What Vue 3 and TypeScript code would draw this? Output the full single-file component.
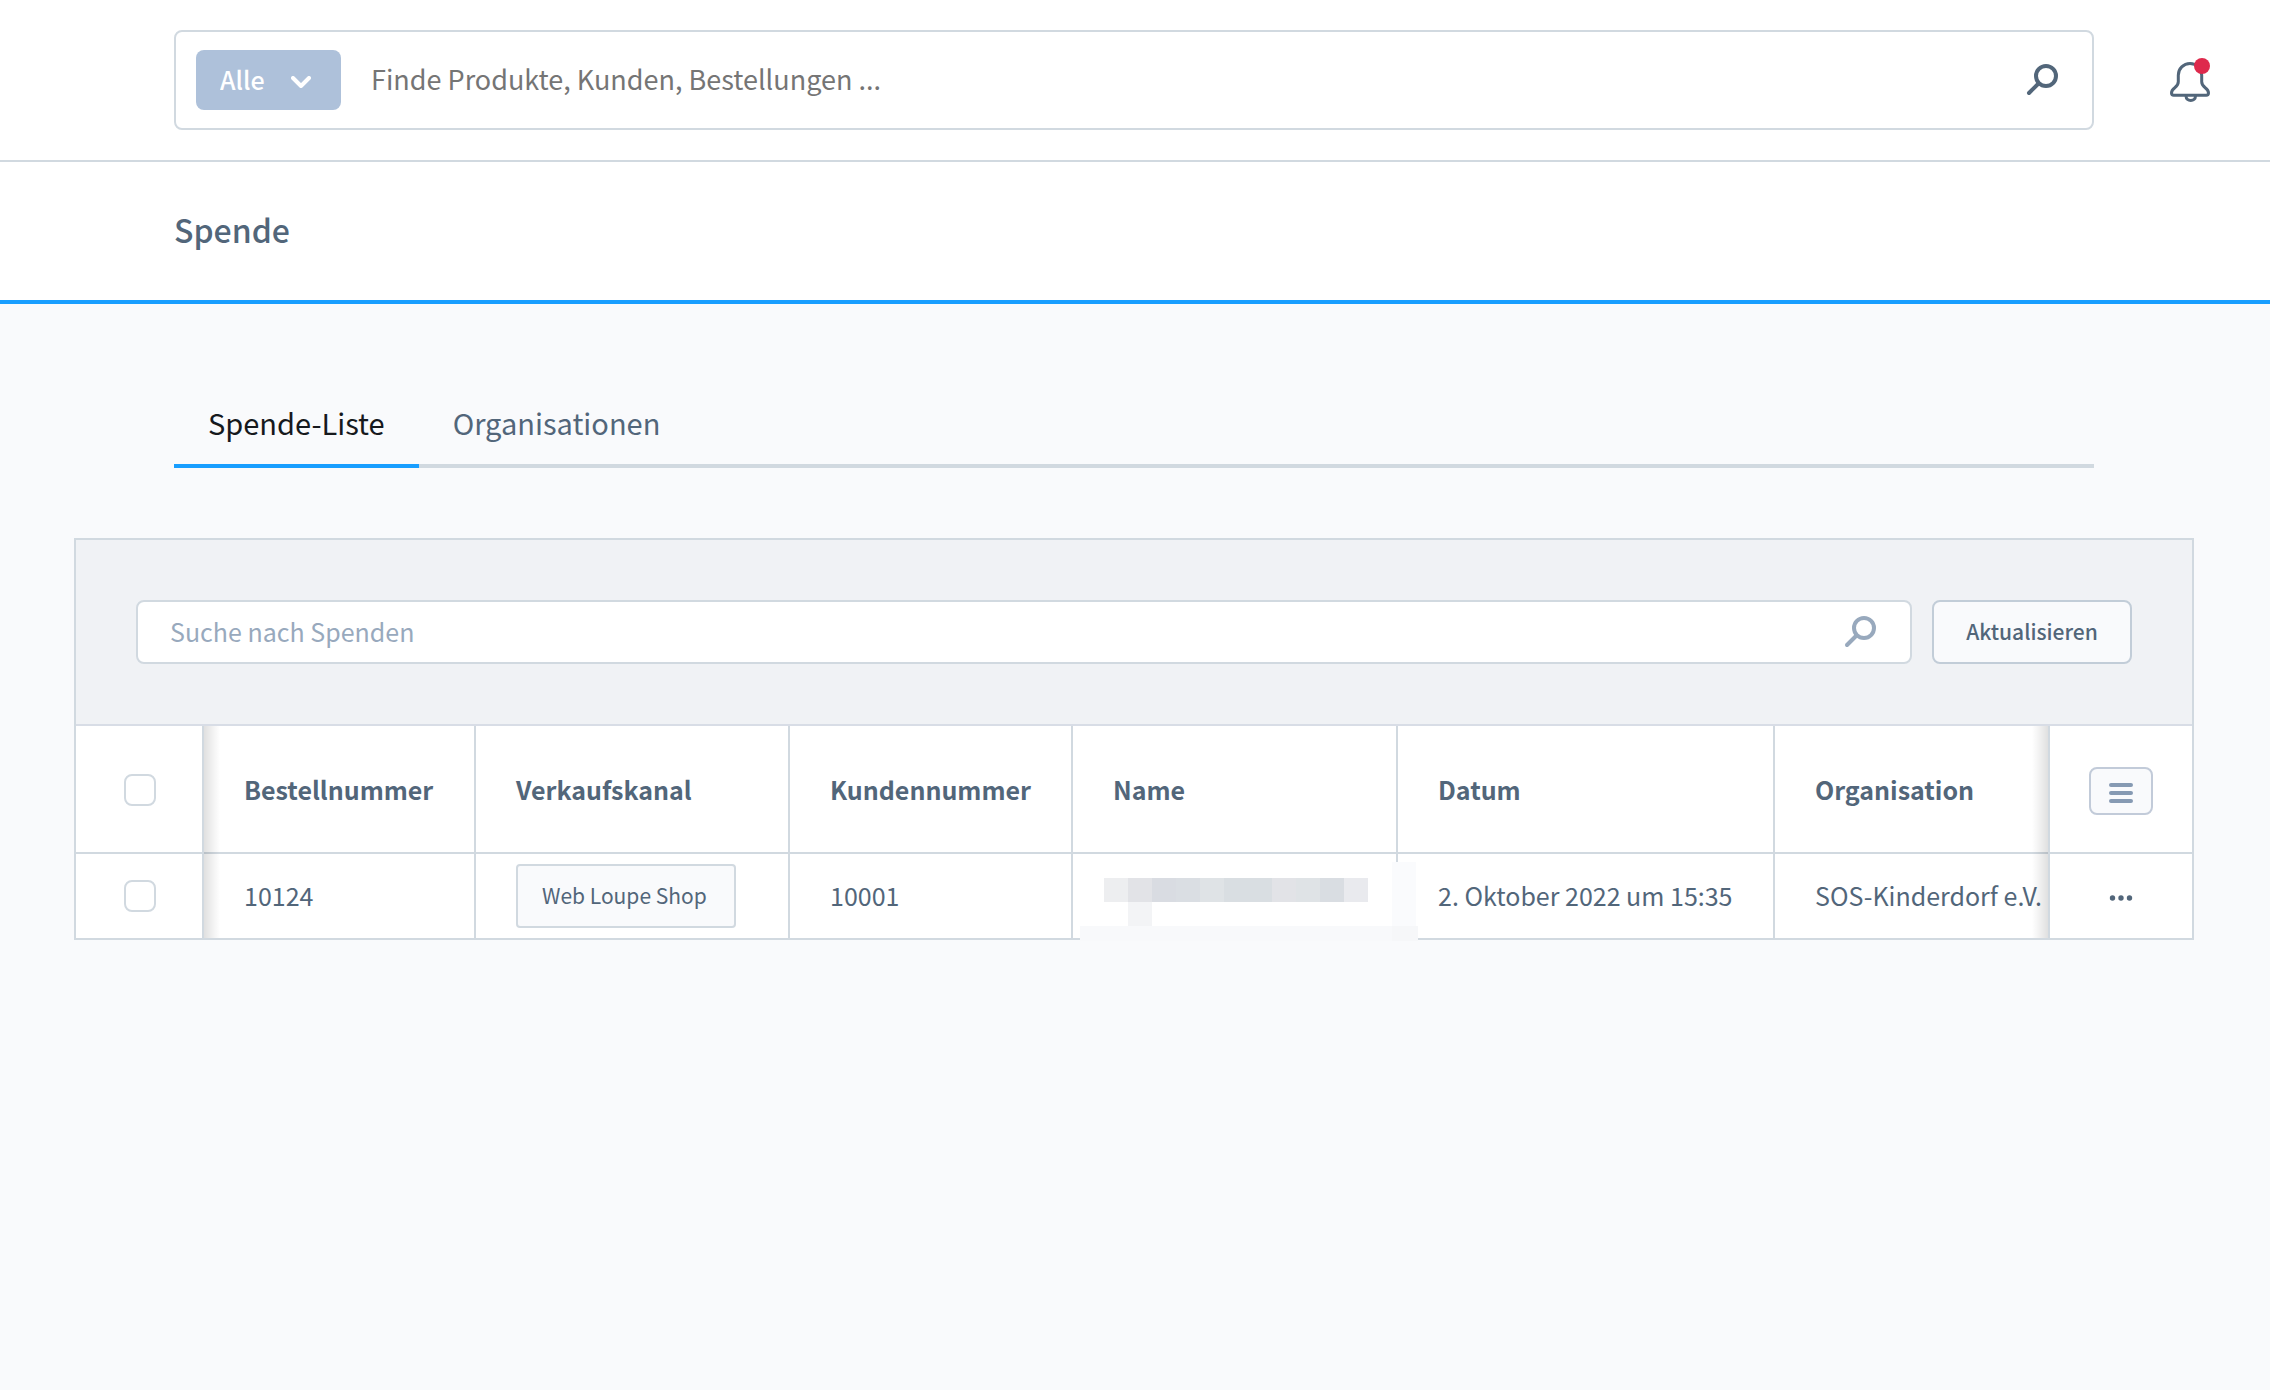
<script setup lang="ts">
import { ref } from 'vue'

interface Donation {
  orderNumber: string
  salesChannel: string
  customerNumber: string
  date: string
  organisation: string
}

const scope = ref('Alle')
const globalTerm = ref('')
const listTerm = ref('')
const activeTab = ref('Spende-Liste')
const tabs = ['Spende-Liste', 'Organisationen']
const columns = ['Bestellnummer', 'Verkaufskanal', 'Kundennummer', 'Name', 'Datum', 'Organisation']
const donations: Donation[] = [
  {
    orderNumber: '10124',
    salesChannel: 'Web Loupe Shop',
    customerNumber: '10001',
    date: '2. Oktober 2022 um 15:35',
    organisation: 'SOS-Kinderdorf e.V.',
  },
]

// Shades of the pixelated block that hides the customer name
const mosaic = ['#edeef0', '#e2e3e7', '#d9dce2', '#dadee3', '#dfe3e6', '#d9dee2', '#d9dee2', '#e2e3e7', '#dfe3e6', '#d9dde2', '#e9eaee']
</script>

<template>
  <div class="page">
    <header class="topbar">
      <form class="global-search" role="search" @submit.prevent>
        <div class="scope">
          <select v-model="scope" class="scope-select" aria-label="Alle">
            <option>Alle</option>
          </select>
          <svg class="scope-caret" width="20" height="12" viewBox="0 0 20 12" aria-hidden="true">
            <path d="M2 2l8 8 8-8" fill="none" stroke="#fff" stroke-width="4" stroke-linecap="round" stroke-linejoin="round" />
          </svg>
        </div>
        <input
          v-model="globalTerm"
          class="global-input"
          type="text"
          placeholder="Finde Produkte, Kunden, Bestellungen ..."
          aria-label="Finde Produkte, Kunden, Bestellungen ..."
        />
        <svg class="search-icon" width="32" height="32" viewBox="0 0 32 32" aria-hidden="true">
          <circle cx="20" cy="12" r="10" />
          <path d="M12.5 19.5L3 29" />
        </svg>
      </form>
      <button class="bell" type="button">
        <svg width="40" height="44" viewBox="0 0 40 44" aria-hidden="true">
          <g fill="none" stroke="#52667a" stroke-width="3" stroke-linejoin="round">
            <path d="M20 5.500a11.700 11.700 0 0 0-11.700 11.700v6.500c0 3-1.500 4.500-3.500 6-2 1.500-3.300 3-3.300 5.300q0 2.200 2.200 2.200h32.600q2.200 0 2.200-2.200c0-2.300-1.300-3.800-3.300-5.300-2-1.500-3.500-3-3.500-6v-6.500a11.700 11.700 0 0 0-11.700-11.700z" />
            <path d="M16 38c0 6 9.500 6 9.500 0" />
          </g>
          <circle cx="32" cy="8" r="8" fill="#de294c" />
        </svg>
      </button>
    </header>

    <div class="title-bar">
      <h1>Spende</h1>
    </div>

    <main>
      <nav class="tabs">
        <a
          v-for="tab in tabs"
          :key="tab"
          href="#"
          class="tab"
          :class="{ active: tab === activeTab }"
          @click.prevent="activeTab = tab"
        >{{ tab }}</a>
      </nav>

      <section class="card">
        <div class="toolbar">
          <label class="list-search">
            <input v-model="listTerm" type="text" placeholder="Suche nach Spenden" aria-label="Suche nach Spenden" />
            <svg class="search-icon" width="32" height="32" viewBox="0 0 32 32" aria-hidden="true">
              <circle cx="20" cy="12" r="10" />
              <path d="M12.5 19.5L3 29" />
            </svg>
          </label>
          <button class="refresh" type="button">Aktualisieren</button>
        </div>

        <table class="grid">
          <colgroup>
            <col class="c-check" />
            <col class="c-order" />
            <col class="c-channel" />
            <col class="c-customer" />
            <col class="c-name" />
            <col class="c-date" />
            <col />
            <col class="c-actions" />
          </colgroup>
          <thead>
            <tr>
              <th class="check"><input type="checkbox" /></th>
              <th v-for="column in columns" :key="column" scope="col">{{ column }}</th>
              <th class="actions">
                <button class="columns-button" type="button">
                  <svg width="24" height="20" viewBox="0 0 24 20" aria-hidden="true">
                    <path d="M2 2h20M2 10h20M2 18h20" stroke="#869ab3" stroke-width="4" stroke-linecap="round" />
                  </svg>
                </button>
              </th>
            </tr>
          </thead>
          <tbody>
            <tr v-for="row in donations" :key="row.orderNumber">
              <td class="check"><input type="checkbox" /></td>
              <td>{{ row.orderNumber }}</td>
              <td class="channel-cell"><span class="channel">{{ row.salesChannel }}</span></td>
              <td>{{ row.customerNumber }}</td>
              <td class="name">
                <svg class="mosaic" width="345" height="87" viewBox="0 0 345 87" aria-hidden="true">
                  <rect x="319" y="8" width="24" height="64" fill="#fafbfd" />
                  <rect x="7" y="72" width="338" height="15" fill="#f8f9fb" />
                  <rect x="319" y="72" width="26" height="15" fill="#f6f7f9" />
                  <rect x="55" y="48" width="24" height="24" fill="#f3f4f6" />
                  <rect
                    v-for="(shade, i) in mosaic"
                    :key="i"
                    :x="31 + i * 24"
                    y="24"
                    width="24"
                    height="24"
                    :fill="shade"
                  />
                </svg>
              </td>
              <td>{{ row.date }}</td>
              <td>{{ row.organisation }}</td>
              <td class="actions">
                <button class="more" type="button">
                  <svg width="24" height="6" viewBox="0 0 24 6" aria-hidden="true">
                    <g fill="#52667a">
                      <circle cx="3.500" cy="3" r="2.700" />
                      <circle cx="12" cy="3" r="2.700" />
                      <circle cx="20.500" cy="3" r="2.700" />
                    </g>
                  </svg>
                </button>
              </td>
            </tr>
          </tbody>
        </table>
      </section>
    </main>
  </div>
</template>

<style>
body {
  margin: 0;
  background: #f9fafc;
}
</style>

<style scoped>
.page {
  min-height: 100vh;
  background: #f9fafc;
  color: #52667a;
  font-family: 'Noto Sans CJK SC', 'Noto Sans', sans-serif;
  font-size: 25px;
  line-height: 36px;
}

* {
  box-sizing: border-box;
}

button,
input,
select {
  margin: 0;
  font: inherit;
  color: inherit;
}

svg {
  display: block;
}

.topbar {
  display: flex;
  align-items: center;
  padding: 30px 60px 30px 174px;
  border-bottom: 2px solid #d1d9e0;
  background: #fff;
}

.global-search {
  flex: 1;
  display: flex;
  align-items: center;
  height: 100px;
  padding: 0 34px 0 20px;
  border: 2px solid #d1d9e0;
  border-radius: 8px;
}

.scope {
  position: relative;
}

.scope-select {
  display: block;
  width: 145px;
  height: 60px;
  padding: 0 24px 2px;
  border: 0;
  border-radius: 8px;
  appearance: none;
  background: #aec1da;
  color: #fff;
  font-weight: 500;
}

.scope-caret {
  position: absolute;
  top: 26px;
  right: 30px;
  pointer-events: none;
}

.global-input {
  flex: 1;
  height: 60px;
  margin-left: 30px;
  padding: 0 0 4px;
  border: 0;
  outline: 0;
  background: none;
  font-size: 27px;
}

.global-input::placeholder {
  color: #757575;
}

.search-icon {
  fill: none;
  stroke: currentColor;
  stroke-width: 4;
  stroke-linecap: round;
}

.bell {
  margin-left: 76px;
  padding: 0;
  border: 0;
  background: none;
}

.title-bar {
  padding: 46px 174px 50px;
  border-bottom: 4px solid #189eff;
  background: #fff;
}

h1 {
  margin: 0;
  font-size: 32px;
  font-weight: 500;
  line-height: 42px;
}

.tabs {
  display: flex;
  margin: 80px 176px 0 174px;
  box-shadow: inset 0 -4px #d1d9e0;
}

.tab {
  padding: 20px 34px 24px;
  border-bottom: 4px solid transparent;
  color: inherit;
  font-size: 29px;
  text-decoration: none;
}

.tab.active {
  border-color: #189eff;
  color: #16191d;
}

.card {
  margin: 70px 76px 0 74px;
  border: 2px solid #d1d9e0;
  background: #fff;
}

.toolbar {
  display: flex;
  gap: 20px;
  padding: 60px;
  border-bottom: 2px solid #d8dde6;
  background: #f0f2f5;
}

.list-search {
  flex: 1;
  display: flex;
  align-items: center;
  height: 64px;
  padding: 0 34px 0 32px;
  border: 2px solid #d1d9e0;
  border-radius: 8px;
  background: #fff;
  color: #98a9bd;
}

.list-search input {
  flex: 1;
  padding: 0 0 2px;
  border: 0;
  outline: 0;
  background: none;
}

.list-search input::placeholder {
  color: #98a9bd;
}

.refresh {
  width: 200px;
  padding: 0 0 2px;
  border: 2px solid #c2cdd8;
  border-radius: 8px;
  background: #f9fafc;
  font-size: 21px;
  font-weight: 500;
}

.grid {
  width: 100%;
  table-layout: fixed;
  border-collapse: separate;
  border-spacing: 0;
}

.c-check { width: 128px; }
.c-order { width: 272px; }
.c-channel { width: 314px; }
.c-customer { width: 283px; }
.c-name { width: 325px; }
.c-date { width: 377px; }
.c-actions { width: 144px; }

th,
td {
  padding: 0 0 0 40px;
  border-right: 2px solid #d1d9e0;
  text-align: left;
  vertical-align: middle;
  white-space: nowrap;
}

th {
  height: 128px;
  border-bottom: 2px solid #d1d9e0;
  font-weight: 700;
}

td {
  height: 84px;
  padding-bottom: 2px;
}

th:nth-last-child(2),
td:nth-last-child(2) {
  border-right: 0;
}

.channel-cell {
  padding-bottom: 0;
}

.check,
.actions {
  position: relative;
  padding: 0;
  text-align: center;
}

.check {
  padding-left: 2px;
}

th.check {
  padding-top: 2px;
}

th.actions {
  padding-top: 4px;
}

.actions {
  border-right: 0;
  border-left: 2px solid #d1d9e0;
}

.check::after,
.actions::before {
  content: '';
  position: absolute;
  top: 0;
  bottom: -2px;
  width: 16px;
}

td.check::after,
td.actions::before {
  bottom: 0;
}

.check::after {
  left: calc(100% + 2px);
  background: linear-gradient(to right, rgba(0, 0, 0, 0.12), rgba(0, 0, 0, 0.06) 50%, transparent);
}

.actions::before {
  right: calc(100% + 2px);
  background: linear-gradient(to left, rgba(0, 0, 0, 0.12), rgba(0, 0, 0, 0.06) 50%, transparent);
}

.check input {
  display: block;
  width: 32px;
  height: 32px;
  margin: 0 auto;
  border: 2px solid #d1d9e0;
  border-radius: 8px;
  appearance: none;
  background: #fff;
}

.channel {
  display: block;
  width: 220px;
  height: 64px;
  padding: 0 24px;
  border: 2px solid #d1d9e0;
  border-radius: 4px;
  background: #f9fafc;
  font-size: 21px;
  line-height: 58px;
}

.name {
  position: relative;
}

.mosaic {
  position: absolute;
  top: 0;
  left: 0;
  z-index: 1;
}

.columns-button {
  display: block;
  width: 64px;
  height: 48px;
  margin: 0 auto;
  padding: 4px 18px 0;
  border: 2px solid #c2cbd9;
  border-radius: 8px;
  background: #f9fafc;
}

.more {
  display: block;
  margin: 0 auto;
  padding: 4px 0 0;
  border: 0;
  background: none;
}
</style>
